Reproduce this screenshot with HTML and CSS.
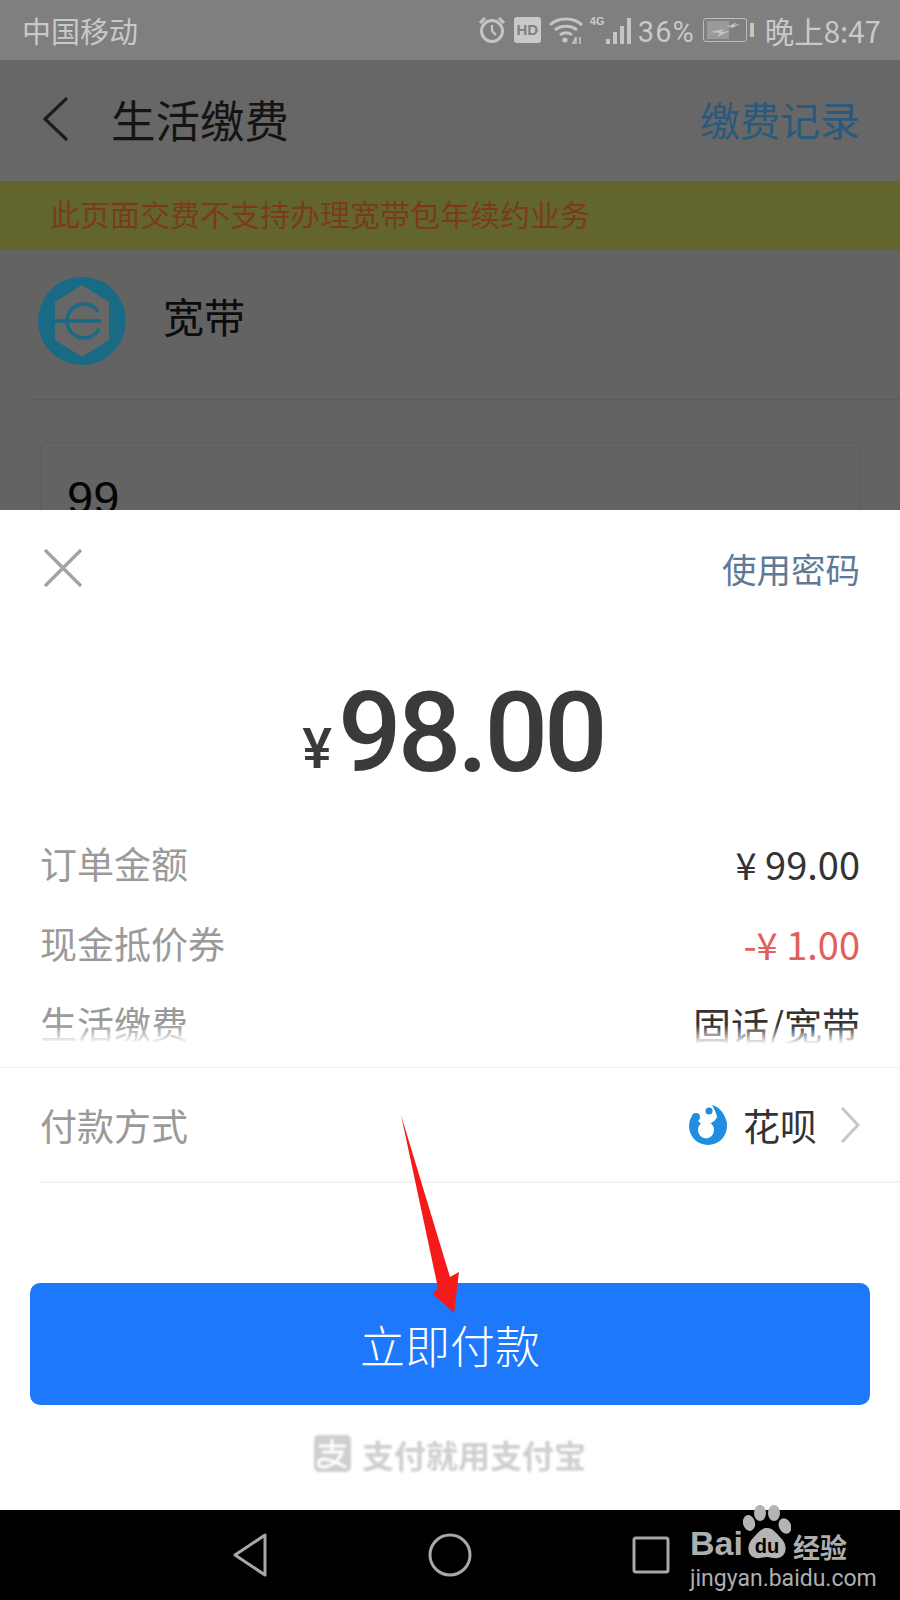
FILE: index.html
```html
<!DOCTYPE html>
<html lang="zh-CN">

<head>
    <meta charset="UTF-8">
    <meta name="viewport" content="width=device-width, initial-scale=1.0">
    <title>生活缴费</title>
    <link rel="stylesheet" href="styles.css">
</head>

<body>
    <div class="screen">
        <!-- dimmed page behind the sheet -->
        <div class="behind">
            <div class="status-bar">
                <span class="carrier">中国移动</span>
                <div class="status-right">
                    <svg class="ic-alarm" width="30" height="30" viewBox="0 0 30 30" fill="none" stroke="#c4c4c4">
                        <circle cx="15" cy="16" r="10.5" stroke-width="3" />
                        <path d="M15 10v6l4 4" stroke-width="2.4" />
                        <path d="M3 8l5-5M27 8l-5-5" stroke-width="3" />
                    </svg>
                    <span class="hd">HD</span>
                    <svg class="ic-wifi" width="35" height="28" viewBox="0 0 35 28" fill="none" stroke="#c4c4c4" stroke-width="3">
                        <path d="M1 9C9 1 25 1 33 9M6 14c6-5 16-5 22 0M11 19c3-3 9-3 12 0" />
                        <circle cx="16" cy="24" r="2.6" fill="#c4c4c4" stroke="none" />
                        <path d="M24 27l3-6v6h-4M31 21v7" stroke-width="1.6" />
                    </svg>
                    <div class="signal">
                        <span class="net">4G</span>
                        <i class="bar b1"></i><i class="bar b2"></i><i class="bar b3"></i><i class="bar b4"></i>
                    </div>
                    <span class="pct">36%</span>
                    <div class="battery">
                        <div class="battery-body">
                            <svg width="36" height="18" viewBox="0 0 36 18" fill="#c4c4c4">
                                <rect x="0" y="0" width="22" height="18" fill="#9a9a9a" />
                                <path d="M3 11l14-3-3 3 9-1-13 6 3-4zM20 6l10-5-3 3 6-1-10 5 2-2z" />
                            </svg>
                        </div>
                        <i class="battery-nub"></i>
                    </div>
                    <span class="clock">晚上8:47</span>
                </div>
            </div>

            <div class="title-bar">
                <svg class="back" width="27" height="44" viewBox="0 0 27 44" fill="none" stroke="#1c1c1c" stroke-width="3.2">
                    <path d="M25 1L3 22l22 21" />
                </svg>
                <h1>生活缴费</h1>
                <a class="records">缴费记录</a>
            </div>

            <div class="notice">此页面交费不支持办理宽带包年续约业务</div>

            <div class="biz">
                <svg class="biz-logo" width="88" height="88" viewBox="0 0 88 88">
                    <circle cx="44" cy="44" r="44" fill="#186a85" />
                    <path d="M44 8l27 17v38L44 80 17 63V25z" fill="#676767" />
                    <circle cx="46" cy="44" r="17" fill="none" stroke="#186a85" stroke-width="3.5" stroke-dasharray="88 18" stroke-dashoffset="-8" />
                    <path d="M17 44h46" stroke="#186a85" stroke-width="3.5" />
                </svg>
                <span class="biz-name">宽带</span>
            </div>

            <div class="amount-card">99</div>
        </div>

        <!-- payment sheet -->
        <div class="sheet">
            <div class="sheet-head">
                <svg width="40" height="40" viewBox="0 0 40 40" stroke="#a3a3a3" stroke-width="3.4">
                    <path d="M2 2l36 36M38 2L2 38" />
                </svg>
                <a class="use-pwd">使用密码</a>
            </div>

            <div class="total"><span class="yen">¥</span><span class="total-num">98.00</span></div>

            <div class="details">
                <div class="row"><span class="row-label">订单金额</span><span class="row-value">¥ 99.00</span></div>
                <div class="row"><span class="row-label">现金抵价券</span><span class="row-value red">-¥ 1.00</span></div>
                <div class="row"><span class="row-label">生活缴费</span><span class="row-value">固话/宽带</span></div>
            </div>

            <div class="pay-method">
                <span class="row-label">付款方式</span>
                <div class="method-right">
                    <svg width="40" height="40" viewBox="0 0 40 40">
                        <circle cx="20" cy="21" r="19" fill="#1f8ee0" />
                        <path d="M8 0h16l6 10c-3 8-10 11-18 8L4 8z" fill="#fff" />
                        <ellipse cx="18" cy="25" rx="8" ry="8.5" fill="#fff" />
                        <path d="M24 0c8 2 14 10 15 20h-9c0-7-2-14-6-20z" fill="#1f8ee0" />
                        <circle cx="8" cy="12" r="4" fill="#1f8ee0" />
                        <circle cx="21" cy="6" r="3.5" fill="#1f8ee0" />
                    </svg>
                    <span class="method-name">花呗</span>
                    <svg width="20" height="36" viewBox="0 0 20 36" fill="none" stroke="#c6c6c6" stroke-width="3">
                        <path d="M2 1l16 17L2 35" />
                    </svg>
                </div>
            </div>

            <button class="pay-btn">立即付款</button>

            <div class="brand">
                <svg width="37" height="37" viewBox="0 0 37 37">
                    <rect width="37" height="37" rx="5" fill="#cfcfcf" />
                    <path d="M5 11h27M18 4v12M8 17h20c-3 9-11 15-20 15-5 0-5-8 2-8 6 0 14 4 22 8" fill="none" stroke="#fff" stroke-width="3" />
                </svg>
                <span class="brand-text">支付就用支付宝</span>
            </div>
        </div>

        <div class="nav-bar">
            <svg width="36" height="44" viewBox="0 0 36 44" fill="none" stroke="#a8a8a8" stroke-width="3" stroke-linejoin="round">
                <path d="M33 2v40L3 22z" />
            </svg>
            <svg width="44" height="44" viewBox="0 0 44 44" fill="none" stroke="#a8a8a8" stroke-width="3">
                <circle cx="22" cy="22" r="20" />
            </svg>
            <svg width="38" height="38" viewBox="0 0 38 38" fill="none" stroke="#a8a8a8" stroke-width="3">
                <rect x="2" y="2" width="34" height="34" rx="2" />
            </svg>
        </div>

        <!-- red arrow drawn over the screenshot -->
        <svg class="arrow" width="70" height="205" viewBox="0 0 70 205">
            <path d="M1 1L50 163l9-5-5 41-21-19 5-6z" fill="#f51a1a" />
        </svg>

        <div class="watermark">
            <div class="wm-top">
                <span class="wm-bai">Bai</span>
                <svg class="wm-paw" width="48" height="62" viewBox="0 0 48 62" fill="#b4b4b4">
                    <ellipse cx="17" cy="8" rx="6" ry="8" />
                    <ellipse cx="31" cy="8" rx="6" ry="8" />
                    <ellipse cx="6" cy="18" rx="6" ry="8" transform="rotate(-15 6 18)" />
                    <ellipse cx="42" cy="21" rx="6" ry="8" transform="rotate(-25 42 21)" />
                    <path d="M24 23c6 0 9 5 14 10 7 7 6 18-3 20-5 1-7-1-11-1s-7 2-11 1c-9-2-10-13-3-20 5-5 8-10 14-10z" />
                    <text x="24" y="48" text-anchor="middle" class="wm-du">du</text>
                </svg>
                <span class="wm-jy">经验</span>
            </div>
            <div class="wm-url">jingyan.baidu.com</div>
        </div>
    </div>
</body>

</html>
```

FILE: styles.css
```css
* {
    box-sizing: border-box;
}

body {
    margin: 0;
    background: #000;
    font-family: "Noto Sans CJK SC", "Liberation Sans", sans-serif;
}

.screen {
    position: relative;
    width: 900px;
    height: 1600px;
    overflow: hidden;
    display: flex;
    flex-direction: column;
}

/* dimmed page */
.behind {
    height: 510px;
    overflow: hidden;
    flex-shrink: 0;
    background: #636363;
}

.status-bar {
    height: 60px;
    padding: 0 19px 0 22px;
    display: flex;
    align-items: center;
    justify-content: space-between;
    background: #7f7f7f;
    color: #c9c9c9;
    font-size: 29px;
    line-height: 60px;
}

.status-right {
    display: flex;
    align-items: center;
}

.ic-alarm {
    margin-right: 7px;
}

.hd {
    width: 27px;
    height: 26px;
    border-radius: 3px;
    background: #c9c9c9;
    color: #7f7f7f;
    font: bold 15px/26px "Liberation Sans", sans-serif;
    text-align: center;
    margin-right: 8px;
}

.ic-wifi {
    margin-right: 6px;
}

.signal {
    width: 42px;
    height: 28px;
    display: flex;
    align-items: flex-end;
    gap: 3px;
    position: relative;
    padding-left: 16px;
    margin-right: 6px;
}

.net {
    position: absolute;
    left: 0;
    top: -1px;
    font: bold 11px/12px "Liberation Sans", sans-serif;
    color: #c9c9c9;
}

.bar {
    width: 4px;
    background: #c4c4c4;
}

.b1 { height: 5px; }
.b2 { height: 12px; }
.b3 { height: 18px; }
.b4 { height: 26px; }

.pct {
    padding-top: 3px;
    font-family: "Roboto", sans-serif;
    letter-spacing: 1px;
    margin-right: 8px;
}

.battery {
    display: flex;
    align-items: center;
    gap: 3px;
    margin-right: 11px;
}

.battery-body {
    width: 44px;
    height: 24px;
    border: 1.5px solid #bdbdbd;
    border-radius: 3px;
    display: flex;
    align-items: center;
    justify-content: center;
}

.battery-nub {
    width: 4px;
    height: 14px;
    background: #c4c4c4;
}

.clock {
    font-size: 29.5px;
    white-space: nowrap;
}

.title-bar {
    height: 122px;
    padding: 0 40px 4px 42px;
    display: flex;
    align-items: center;
    background: #676767;
    border-bottom: 1px solid #5d5d5d;
}

.title-bar h1 {
    margin: 0 0 0 42px;
    flex: 1;
    font-size: 44.5px;
    font-weight: 400;
    color: #141414;
}

.records {
    font-size: 40px;
    color: #275a7e;
}

.notice {
    height: 68px;
    padding-left: 50px;
    background: #63652f;
    color: #7a3c18;
    font-size: 30px;
    line-height: 62px;
}

.biz {
    height: 150px;
    margin-left: 30px;
    padding: 27px 0 0 8px;
    display: flex;
    align-items: flex-start;
    gap: 37px;
    border-bottom: 1px solid #5a5a5a;
}

.biz-name {
    font-size: 41px;
    color: #0c0c0c;
    line-height: 76px;
}

.amount-card {
    height: 120px;
    margin: 42px 40px 0;
    padding: 22px 26px 0;
    border: 1px solid #5c5c5c;
    border-radius: 4px;
    color: #050505;
    font: 47px/66px "Liberation Sans", sans-serif;
}

/* payment sheet */
.sheet {
    height: 1000px;
    flex-shrink: 0;
    background: #fff;
}

.sheet-head {
    height: 116px;
    padding: 0 40px 0 43px;
    display: flex;
    align-items: center;
    justify-content: space-between;
}

.use-pwd {
    font-size: 34.5px;
    color: #5e7a96;
}

.total {
    height: 197px;
    padding: 16px 0 0 6px;
    display: flex;
    align-items: center;
    justify-content: center;
    color: #3a3a3a;
    font-family: "Roboto", sans-serif;
    font-weight: 500;
}

.yen {
    font-size: 56px;
    margin: 32px 6px 0 0;
}

.total-num {
    font-size: 112px;
    letter-spacing: -4px;
    line-height: 130px;
}

.details {
    position: relative;
    height: 245px;
    padding: 0 40px;
    border-bottom: 1px solid #f0f0f0;
}

.details::after {
    content: "";
    position: absolute;
    left: 0;
    right: 0;
    bottom: 18px;
    height: 24px;
    background: linear-gradient(rgba(255, 255, 255, 0), #fff 80%);
}

.row {
    height: 80px;
    display: flex;
    align-items: center;
    justify-content: space-between;
}

.row-label {
    font-size: 37px;
    color: #9a9a9a;
}

.row-value {
    font-size: 38px;
    color: #333;
}

.red {
    color: #e2605a;
}

.pay-method {
    height: 115px;
    margin-left: 40px;
    padding-right: 40px;
    display: flex;
    align-items: center;
    justify-content: space-between;
    border-bottom: 2px solid #f3f3f3;
}

.method-right {
    display: flex;
    align-items: center;
}

.method-name {
    margin: 0 23px 0 15px;
    font-size: 37px;
    color: #333;
}

.pay-btn {
    display: block;
    width: 840px;
    height: 122px;
    margin: 100px 30px 0;
    border: none;
    border-radius: 10px;
    background: #1e78fb;
    color: #fff;
    font-family: inherit;
    font-size: 45px;
    font-weight: 300;
}

.brand {
    height: 105px;
    padding-bottom: 8px;
    display: flex;
    align-items: center;
    justify-content: center;
    gap: 11px;
    filter: blur(0.9px);
}

.brand-text {
    font-size: 32px;
    font-weight: 700;
    line-height: 40px;
    color: #cfcfcf;
}

.nav-bar {
    height: 90px;
    padding-left: 232px;
    flex-shrink: 0;
    display: flex;
    align-items: center;
    background: #000;
    gap: 160px;
}

/* overlays */
.arrow {
    position: absolute;
    left: 400px;
    top: 1114px;
}

.watermark {
    position: absolute;
    left: 690px;
    top: 1505px;
    width: 170px;
    color: #aeaeae;
}

.wm-top {
    display: flex;
    align-items: flex-end;
    height: 62px;
}

.wm-bai {
    width: 56px;
    font: bold 34px/44px "Liberation Sans", sans-serif;
    margin-bottom: 2px;
}

.wm-paw {
    margin-left: -3px;
    flex-shrink: 0;
}

.wm-du {
    font: bold 20px "Liberation Sans", sans-serif;
    fill: #000;
}

.wm-jy {
    margin-left: 2px;
    font-size: 27px;
    font-weight: 700;
    line-height: 40px;
    white-space: nowrap;
}

.wm-url {
    margin-top: -2px;
    font: 23px/28px "Roboto", sans-serif;
    white-space: nowrap;
}
```
